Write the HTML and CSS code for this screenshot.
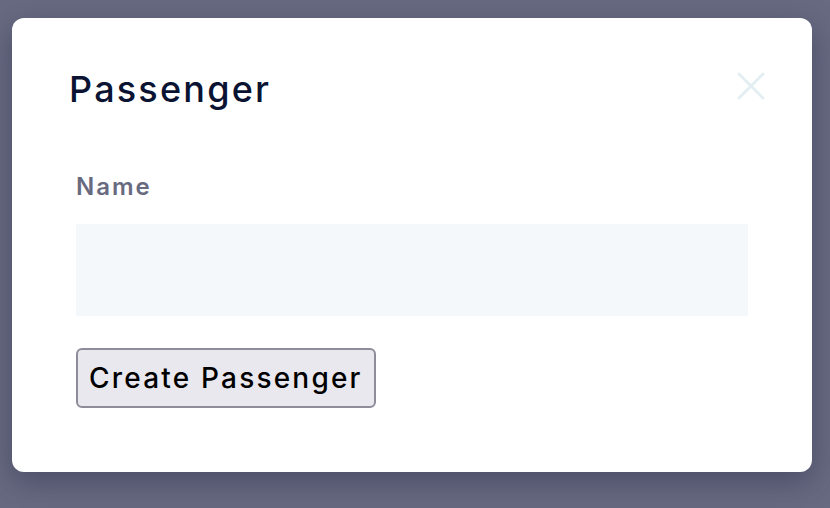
FILE: index.html
```html
<!DOCTYPE html>
<html>
<head>
<meta charset="utf-8">
<link rel="stylesheet" href="styles.css">
</head>
<body>
<div class="overlay">
  <div class="modal">
    <div class="header">
      <h1 class="title">Passenger</h1>
      <button class="close" aria-label="Close">
        <svg width="30" height="30" viewBox="0 0 30 30"><path d="M3 3 L27 27 M27 3 L3 27" stroke="#e3eef3" stroke-width="2.8" stroke-linecap="round" fill="none"/></svg>
      </button>
    </div>
    <form class="form">
      <label class="label">Name</label>
      <input class="input" type="text">
      <button type="button" class="submit">Create Passenger</button>
    </form>
  </div>
</div>
</body>
</html>
```
FILE: styles.css
```css
html, body { margin: 0; padding: 0; }
body {
  width: 830px; height: 508px; overflow: hidden;
  background: #676a80;
  font-family: Inter, "Liberation Sans", sans-serif;
}
.overlay {
  padding: 18px 18px 0 12px;
  box-sizing: border-box;
  height: 508px;
}
.modal {
  width: 800px; height: 454px;
  box-sizing: border-box;
  background: #fff;
  border-radius: 12px;
  box-shadow: 0 10px 30px rgba(40, 42, 70, 0.45);
  padding: 50px 46px 0 57px;
}
.header {
  display: flex; justify-content: space-between; align-items: flex-start;
}
.title {
  margin: 0;
  font-size: 36px;
  font-weight: 500;
  color: #0b1332;
  letter-spacing: 2.2px;
  line-height: 42px;
}
.close {
  border: 0; background: none; padding: 0; margin-top: 3px;
  width: 30px; height: 30px;
}
.form {
  display: flex; flex-direction: column; align-items: flex-start;
  padding: 0 18px 0 7px;
  margin-top: 63px;
}
.label {
  font-size: 24px; font-weight: 600; color: #686b80;
  letter-spacing: 2px;
  line-height: 28px;
}
.input {
  margin-top: 23px;
  width: 100%; height: 92px; box-sizing: border-box;
  border: 0; background: #f5f8fa;
}
.submit {
  margin-top: 32px;
  height: 60px;
  padding: 0 11px 0 11px;
  border: 2px solid #8e8c98;
  border-radius: 6px;
  background: #e9e8ee;
  font-family: Inter, "Liberation Sans", sans-serif;
  font-size: 28px; font-weight: 500;
  letter-spacing: 2.2px;
  color: #000;
}
```
